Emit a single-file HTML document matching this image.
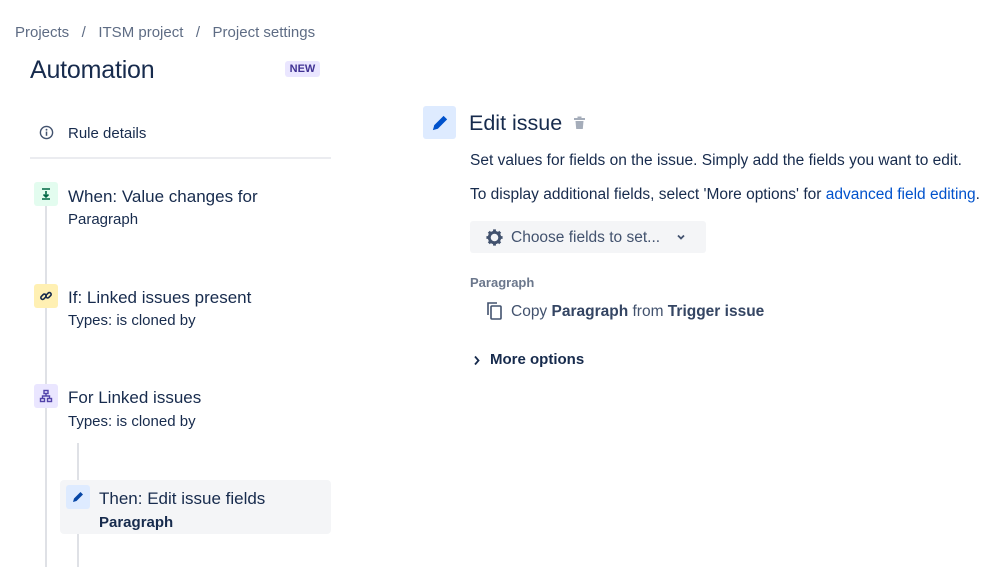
<!DOCTYPE html>
<html><head><meta charset="utf-8"><style>
*{margin:0;padding:0;box-sizing:border-box}
body{width:999px;height:567px;overflow:hidden;background:#fff;font-family:"Liberation Sans",sans-serif;color:#172b4d;position:relative}
.a{position:absolute;white-space:nowrap;line-height:1}
.ic{position:absolute;width:24px;height:24px;border-radius:3px;display:flex;align-items:center;justify-content:center}
</style></head><body>
<div class="a" style="left:15px;top:25px;font-size:15px;color:#5e6c84">Projects&nbsp;&nbsp;&nbsp;/&nbsp;&nbsp;&nbsp;ITSM project&nbsp;&nbsp;&nbsp;/&nbsp;&nbsp;&nbsp;Project settings</div>
<div class="a" style="left:30px;top:58px;font-size:25px;color:#172b4d;letter-spacing:-0.2px">Automation</div>
<div class="a" style="left:285px;top:61px;width:35px;height:16px;background:#eae6ff;border-radius:3px;color:#403294;font-size:11px;font-weight:bold;text-align:center;line-height:16px">NEW</div>
<svg class="a" style="left:39px;top:125px" width="15" height="15" viewBox="0 0 16 16"><circle cx="8" cy="8" r="6.5" fill="none" stroke="#42526e" stroke-width="1.5"/><rect x="7.2" y="7" width="1.6" height="4.5" fill="#42526e"/><circle cx="8" cy="5" r="1" fill="#42526e"/></svg>
<div class="a" style="left:68px;top:126px;font-size:15px">Rule details</div>
<div class="a" style="left:30px;top:157px;width:301px;height:2px;background:#ebecf0"></div>
<div class="a" style="left:45px;top:206px;width:2px;height:361px;background:#dfe1e6"></div>
<div class="a" style="left:77px;top:443px;width:2px;height:124px;background:#dfe1e6"></div>

<div class="ic" style="left:34px;top:182px;background:#e3fcef"><svg width="14" height="14" viewBox="0 0 14 14"><path d="M3 2h8M7 4v6M4.5 7.5L7 10l2.5-2.5M3 12h8" stroke="#006644" stroke-width="1.6" fill="none"/></svg></div>
<div class="a" style="left:68px;top:188px;font-size:17px">When: Value changes for</div>
<div class="a" style="left:68px;top:212px;font-size:15px">Paragraph</div>

<div class="ic" style="left:34px;top:284px;background:#fff0b3"><svg width="14" height="14" viewBox="0 0 14 14"><g fill="none" stroke="#172b4d" stroke-width="1.6"><rect x="1.5" y="6" width="6" height="3.5" rx="1.7" transform="rotate(-45 4.5 7.75)"/><rect x="6.5" y="4.5" width="6" height="3.5" rx="1.7" transform="rotate(-45 9.5 6.25)"/></g></svg></div>
<div class="a" style="left:68px;top:289px;font-size:17px">If: Linked issues present</div>
<div class="a" style="left:68px;top:313px;font-size:15px">Types: is cloned by</div>

<div class="ic" style="left:34px;top:384px;background:#eae6ff"><svg width="14" height="14" viewBox="0 0 14 14"><g fill="none" stroke="#5243aa" stroke-width="1.4"><rect x="5" y="1.5" width="4" height="3"/><rect x="1.5" y="9.5" width="4" height="3"/><rect x="8.5" y="9.5" width="4" height="3"/><path d="M7 4.5v2.5M3.5 9.5V7h7v2.5"/></g></svg></div>
<div class="a" style="left:68px;top:389px;font-size:17px">For Linked issues</div>
<div class="a" style="left:68px;top:414px;font-size:15px">Types: is cloned by</div>

<div class="a" style="left:60px;top:480px;width:271px;height:54px;background:#f4f5f7;border-radius:4px"></div>
<div class="ic" style="left:66px;top:485px;background:#deebff"><svg width="14" height="14" viewBox="0 0 14 14"><path d="M2 12l1-3.5 6.5-6.5 2.5 2.5-6.5 6.5z" fill="#0747a6"/></svg></div>
<div class="a" style="left:99px;top:490px;font-size:17px">Then: Edit issue fields</div>
<div class="a" style="left:99px;top:515px;font-size:15px;font-weight:bold">Paragraph</div>

<div class="a" style="left:423px;top:106px;width:33px;height:33px;background:#deebff;border-radius:3px;display:flex;align-items:center;justify-content:center"><svg width="20" height="20" viewBox="0 0 14 14"><path d="M2 12l1-3.5 6.5-6.5 2.5 2.5-6.5 6.5z" fill="#0052cc"/></svg></div>
<div class="a" style="left:469px;top:113px;font-size:21.5px">Edit issue</div>
<svg class="a" style="left:573px;top:116px" width="13" height="14" viewBox="0 0 13 14"><rect x="1" y="2" width="11" height="2" fill="#a5adba"/><rect x="4.5" y="0.5" width="4" height="2" fill="#a5adba"/><path d="M2.5 5h8l-.7 8h-6.6z" fill="#a5adba"/></svg>
<div class="a" style="left:470px;top:153px;font-size:15.5px">Set values for fields on the issue. Simply add the fields you want to edit.</div>
<div class="a" style="left:470px;top:187px;font-size:15.5px">To display additional fields, select 'More options' for <span style="color:#0052cc">advanced field editing</span>.</div>
<div class="a" style="left:470px;top:221px;width:236px;height:32px;background:#f4f5f7;border-radius:3px"></div>
<svg class="a" style="left:485px;top:228px" width="19" height="19" viewBox="0 0 20 20"><g fill="none" stroke="#42526e"><circle cx="10" cy="10" r="5.5" stroke-width="3"/><path d="M10 1.5v3M10 15.5v3M1.5 10h3M15.5 10h3M4 4l2 2M14 14l2 2M4 16l2-2M14 6l2-2" stroke-width="3"/></g></svg>
<div class="a" style="left:511px;top:230px;font-size:15.5px;color:#42526e;font-weight:500">Choose fields to set...</div>
<svg class="a" style="left:676px;top:234px" width="10" height="7" viewBox="0 0 10 7"><path d="M2 1.5l3 3 3-3" stroke="#42526e" stroke-width="1.8" fill="none"/></svg>
<div class="a" style="left:470px;top:276px;font-size:13px;color:#6b778c;font-weight:bold">Paragraph</div>
<svg class="a" style="left:486px;top:301px" width="18" height="20" viewBox="0 0 18 20"><g fill="none" stroke="#42526e" stroke-width="1.6"><path d="M2 14V2h9"/><rect x="5" y="5" width="10" height="13" rx="1"/></g></svg>
<div class="a" style="left:511px;top:304px;font-size:15.5px;color:#42526e">Copy <b style="color:#344563">Paragraph</b> from <b style="color:#344563">Trigger issue</b></div>
<svg class="a" style="left:473px;top:355px" width="8" height="11" viewBox="0 0 8 11"><path d="M2 1.5l3.5 4-3.5 4" stroke="#172b4d" stroke-width="1.8" fill="none"/></svg>
<div class="a" style="left:490px;top:352px;font-size:15px;font-weight:bold;color:#172b4d">More options</div>
</body></html>
